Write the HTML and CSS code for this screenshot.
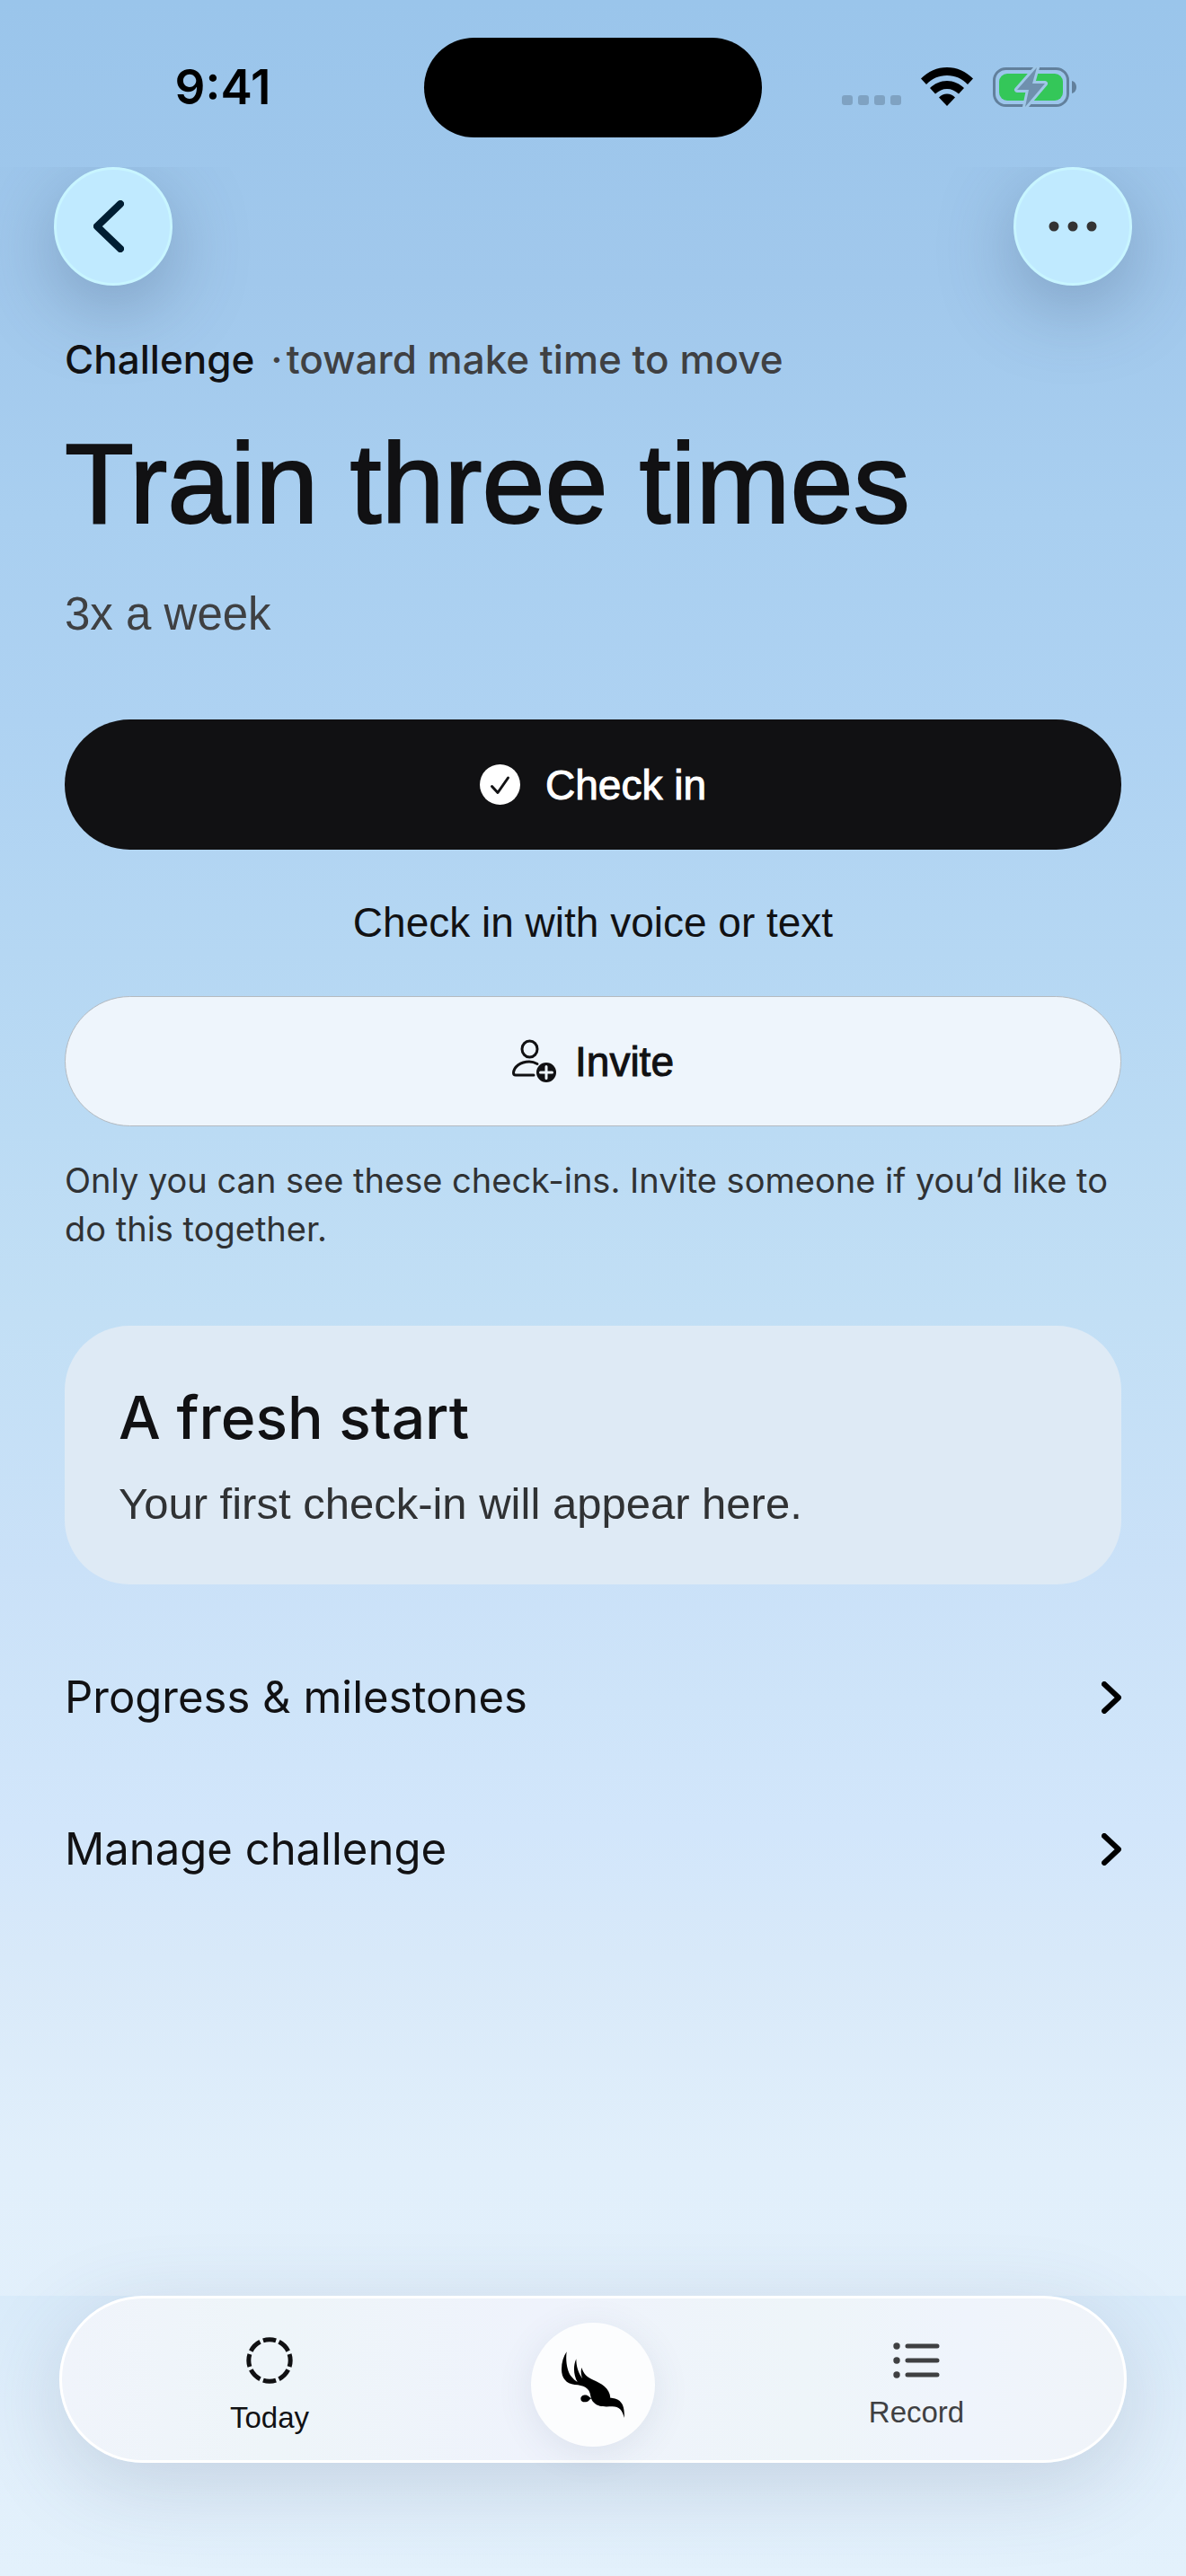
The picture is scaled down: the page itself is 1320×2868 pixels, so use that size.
FILE: index.html
```
<!DOCTYPE html>
<html lang="en">
  <head>
    <meta charset="UTF-8" />
    <meta name="viewport" content="width=device-width, initial-scale=1.0" />
    <title>Train three times</title>
    <link rel="stylesheet" href="styles.css">
  </head>
  <body>
    <div class="status-bar">
      <time class="status-time">9:41</time>
      <div class="island"></div>
      <div class="status-icons">
        <svg class="icon-signal" viewBox="0 0 66 44" aria-hidden="true">
          <rect x="0" y="31" width="12" height="11" rx="3" />
          <rect x="18" y="31" width="12" height="11" rx="3" />
          <rect x="36" y="31" width="12" height="11" rx="3" />
          <rect x="54" y="31" width="12" height="11" rx="3" />
        </svg>
        <svg class="icon-wifi" viewBox="0 0 58 44" aria-hidden="true">
          <path d="M29 0C40 0 50 4.500 58 12.500L52 19C46 12.500 38 9 29 9S12 12.500 6 19L0 12.500C8 4.500 18 0 29 0Z" />
          <path d="M29 15C36 15 43 18 48 23L42 29.500C38 26 34 24 29 24S20 26 16 29.500L10 23C15 18 22 15 29 15Z" />
          <path d="M29 29.500C32.500 29.500 35.500 31 38 33.500L29 43L20 33.500C22.500 31 25.500 29.500 29 29.500Z" />
        </svg>
        <svg class="icon-battery" viewBox="0 0 94 46" aria-hidden="true">
          <rect class="battery-shell" x="1.500" y="2.500" width="82" height="41" rx="13" />
          <path class="battery-shell-cap" d="M88 16C91.500 17 93 20 93 23S91.500 29 88 30Z" />
          <rect class="battery-level" x="7" y="8" width="71" height="30" rx="9" />
          <path class="battery-bolt" d="M49 1L27 26H40L36 45L58 19H44L49 1Z" />
        </svg>
      </div>
    </div>

    <header class="nav-header">
      <button class="round-btn" type="button" aria-label="Back">
        <svg class="icon-back" viewBox="0 0 34 58" aria-hidden="true">
          <path d="M30 4L4 29L30 54" />
        </svg>
      </button>
      <button class="round-btn" type="button" aria-label="More options">
        <svg class="icon-more" viewBox="0 0 54 12" aria-hidden="true">
          <circle cx="6" cy="6" r="5.500" />
          <circle cx="27" cy="6" r="5.500" />
          <circle cx="48" cy="6" r="5.500" />
        </svg>
      </button>
    </header>

    <main class="content">
      <p class="eyebrow">
        <span class="eyebrow-kind">Challenge</span>
        <span class="eyebrow-goal"><span>·</span><span>toward make time to move</span></span>
      </p>
      <h1>Train three times</h1>
      <p class="cadence">3x a week</p>

      <button class="btn btn-primary" type="button">
        <svg class="icon-check" viewBox="0 0 45 45" aria-hidden="true">
          <circle cx="22.500" cy="22.500" r="22.500" />
          <path d="M13.500 24.500L20 31.500L31.500 15" />
        </svg>
        Check in
      </button>
      <a class="text-link" href="#voice">Check in with voice or text</a>
      <button class="btn btn-secondary" type="button">
        <svg class="icon-invite" viewBox="0 0 50 50" aria-hidden="true">
          <ellipse cx="19.500" cy="11" rx="8.500" ry="9" />
          <path d="M28 27.500C25 25.800 22 25 19 25C9 25 2 31 1.500 37.500C1.500 39.500 2.500 40 4 40H24" />
          <circle class="invite-badge" cx="38" cy="37" r="11" />
          <path class="invite-plus" d="M38 30.500V43.500M31.500 37H44.500" />
        </svg>
        Invite
      </button>
      <p class="note">
        Only you can see these check-ins. Invite someone if you’d like to do
        this together.
      </p>

      <section class="card">
        <h2>A fresh start</h2>
        <p>Your first check-in will appear here.</p>
      </section>

      <div class="rows">
        <a class="row" href="#progress">
          Progress &amp; milestones
          <svg class="icon-chevron" viewBox="0 0 22 36" aria-hidden="true">
            <path d="M3 3L19 18L3 33" />
          </svg>
        </a>
        <a class="row" href="#manage">
          Manage challenge
          <svg class="icon-chevron" viewBox="0 0 22 36" aria-hidden="true">
            <path d="M3 3L19 18L3 33" />
          </svg>
        </a>
      </div>
    </main>

    <footer class="dock">
      <nav class="tab-bar">
        <a class="tab tab-active" href="#today">
          <svg class="icon-today" viewBox="0 0 52 52" aria-hidden="true">
            <circle cx="26" cy="26" r="23.200" pathLength="80" />
          </svg>
          Today
        </a>
        <a class="tab-home" href="#home" aria-label="Home">
          <svg class="icon-bird" viewBox="0 0 210 222" aria-hidden="true">
            <path d="M17 1C13 30 18 66 33 84C39 92 46 98 53 102C40 78 38 50 49 25C49 48 54 68 70 91C64 76 64 64 67 54C74 76 85 86 106 95C132 107 161 121 163 155C185 156 214 164 209 222C203 195 192 184 170 184C145 184 125 187 109 172C102 166 99 158 97 149C94 121 73 113 44 111C15 108 0 88 0 60C0 37 6 17 17 1Z" />
            <path d="M64 158C64 144 84 142 91 150C94 153 96 155 100 157C96 159 94 161 91 164C83 172 64 171 64 158Z" />
          </svg>
        </a>
        <a class="tab" href="#record">
          <svg class="icon-record" viewBox="0 0 52 40" aria-hidden="true">
            <circle cx="4" cy="4" r="3.700" />
            <circle cx="4" cy="20" r="3.700" />
            <circle cx="4" cy="36" r="3.700" />
            <path d="M16 4H49M16 20H49M16 36H49" />
          </svg>
          Record
        </a>
      </nav>
    </footer>
  </body>
</html>
```
FILE: styles.css
```
:root {
  --ink: #111113;
  --ink-soft: #3f4042;
  --ink-note: #303234;
  --glass-round: #c0eaff;
  --card-bg: #deeaf5;
  --font-text: Inter, "Liberation Sans", sans-serif;
  --font-display: "Liberation Sans", Inter, sans-serif;
}

* {
  box-sizing: border-box;
  margin: 0;
  padding: 0;
}

body {
  display: flex;
  flex-direction: column;
  min-height: 100vh;
  font-family: var(--font-text);
  color: var(--ink);
  background: linear-gradient(
    to bottom,
    #9ac5eb 0%,
    #a1c8ec 11%,
    #a9cff0 20%,
    #aed2f2 28%,
    #b5d7f3 37%,
    #bbdbf4 44%,
    #c2dff5 51%,
    #cae1f8 61%,
    #cee4f9 66%,
    #d2e6fb 71%,
    #d8e9f9 76%,
    #e1effb 84%,
    #e4f1fc 100%
  );
}

a {
  color: inherit;
  text-decoration: none;
}

button {
  font: inherit;
  color: inherit;
  border: none;
  cursor: pointer;
}

svg {
  display: block;
  flex: none;
}

/* Status bar */
.status-bar {
  display: grid;
  grid-template-columns: 1fr 376px 1fr;
  align-items: center;
  justify-items: center;
  height: 186px;
  padding: 41px 0 33px;
}

.status-time {
  padding-left: 24px;
  font-size: 53px;
  font-weight: 600;
  line-height: 60px;
  color: #000;
}

.island {
  width: 100%;
  height: 111px;
  border-radius: 56px;
  background: #000;
}

.status-icons {
  display: flex;
  align-items: center;
  gap: 22px;
  padding-right: 32px;
}

.icon-signal {
  width: 66px;
  height: 44px;
  fill: #7fa2c2;
}

.icon-wifi {
  width: 58px;
  height: 44px;
}

.icon-battery {
  width: 94px;
  height: 46px;
}

.battery-shell {
  fill: none;
  stroke: #62809c;
  stroke-width: 3;
}

.battery-shell-cap {
  fill: #62809c;
}

.battery-level {
  fill: #34c759;
}

.battery-bolt {
  fill: #6f90ae;
  stroke: #9fc7e8;
  stroke-width: 6;
  stroke-linejoin: round;
  paint-order: stroke;
}

/* Header */
.nav-header {
  display: flex;
  justify-content: space-between;
  padding: 0 60px;
  /* shadows are cut off at the status bar */
  clip-path: inset(0 0 -140px 0);
}

.round-btn {
  display: flex;
  align-items: center;
  justify-content: center;
  width: 132px;
  height: 132px;
  border: 3px solid #c8f5ff;
  border-radius: 50%;
  background: var(--glass-round);
  box-shadow: 0 24px 84px rgba(60, 80, 110, 0.34);
}

.icon-back {
  width: 34px;
  height: 58px;
  margin-right: 10px;
  fill: none;
  stroke: #001e33;
  stroke-width: 8;
  stroke-linecap: round;
  stroke-linejoin: round;
}

.icon-more {
  width: 54px;
  height: 12px;
  fill: #333;
}

/* Content */
.content {
  position: relative;
  padding: 54px 72px 80px;
}

.eyebrow {
  display: flex;
  gap: 18px;
  font-size: 44px;
  font-weight: 500;
  line-height: 56px;
}

.eyebrow-goal {
  display: flex;
  gap: 4px;
  color: var(--ink-soft);
}

h1 {
  margin-top: 42px;
  font-family: var(--font-display);
  font-size: 126px;
  font-weight: 400;
  line-height: 138px;
  -webkit-text-stroke: 2px currentColor;
}

.cadence {
  margin-top: 44px;
  font-family: var(--font-display);
  font-size: 51px;
  line-height: 64px;
  color: var(--ink-soft);
}

.btn {
  display: flex;
  align-items: center;
  justify-content: center;
  width: 100%;
  height: 145px;
  border-radius: 73px;
  font-family: var(--font-display);
  font-size: 46px;
  -webkit-text-stroke: 1px currentColor;
}

.btn-primary {
  gap: 28px;
  margin-top: 85px;
  background: var(--ink);
  color: #fff;
}

.icon-check {
  width: 45px;
  height: 45px;
  fill: #fff;
}

.icon-check path {
  fill: none;
  stroke: var(--ink);
  stroke-width: 3;
  stroke-linecap: round;
  stroke-linejoin: round;
}

.text-link {
  display: block;
  font-family: var(--font-display);
  font-size: 46px;
  line-height: 163px;
  text-align: center;
}

.btn-secondary {
  gap: 20px;
  border: 1px solid #b4bac0;
  background: #eef5fc;
}

.icon-invite {
  width: 50px;
  height: 50px;
  fill: none;
  stroke: var(--ink);
  stroke-width: 3;
  stroke-linecap: round;
}

.icon-invite .invite-badge {
  fill: var(--ink);
  stroke: none;
}

.icon-invite .invite-plus {
  stroke: #eef5fc;
}

.note {
  margin-top: 33px;
  font-size: 38px;
  line-height: 54px;
  color: var(--ink-note);
}

.card {
  margin-top: 81px;
  padding: 60px;
  border-radius: 72px;
  background: var(--card-bg);
}

.card h2 {
  font-size: 66px;
  font-weight: 500;
  line-height: 84px;
}

.card p {
  margin-top: 24px;
  font-family: var(--font-display);
  font-size: 49px;
  line-height: 60px;
  color: var(--ink-note);
}

.rows {
  margin-top: 41px;
}

.row {
  display: flex;
  align-items: center;
  justify-content: space-between;
  height: 169px;
  font-size: 49px;
}

.icon-chevron {
  width: 22px;
  height: 36px;
  fill: none;
  stroke: #000;
  stroke-width: 6;
  stroke-linecap: round;
  stroke-linejoin: round;
}

/* Tab bar */
.dock {
  margin-top: auto;
  padding: 0 66px 126px;
  background: linear-gradient(to bottom, #d9ebfa, #e1effb 50%, #e3f1fc);
}

.tab-bar {
  display: grid;
  grid-template-columns: 222px 138px 222px;
  align-items: center;
  justify-content: space-between;
  height: 186px;
  padding: 0 120px;
  border: 3px solid #fff;
  border-radius: 93px;
  background: linear-gradient(to right, #f0f4fb, #eef5f9 20%, #eff3fc 45%, #eef5f9 70%, #eff4fc 85%, #f0f4f9);
  box-shadow: 0 24px 96px rgba(60, 80, 110, 0.18);
}

.tab {
  display: flex;
  flex-direction: column;
  align-items: center;
  gap: 18px;
  margin-top: 16px;
  font-family: var(--font-display);
  font-size: 33px;
  line-height: 40px;
  color: var(--ink-soft);
}

.tab-active {
  color: var(--ink);
}

.tab-home {
  display: flex;
  align-items: center;
  justify-content: center;
  height: 138px;
  margin-top: 12px;
  border-radius: 50%;
  background: #fcfdfe;
  box-shadow: 0 8px 40px rgba(60, 80, 110, 0.1);
}

.icon-today {
  width: 52px;
  height: 52px;
  fill: none;
  stroke: var(--ink);
  stroke-width: 5;
  stroke-dasharray: 8 2;
  stroke-dashoffset: 4;
}

.icon-bird {
  width: 70px;
  height: 74px;
}

.icon-record {
  width: 52px;
  height: 40px;
  fill: var(--ink-soft);
  stroke: none;
}

.icon-record path {
  stroke: var(--ink-soft);
  stroke-width: 5;
  stroke-linecap: round;
}
```
